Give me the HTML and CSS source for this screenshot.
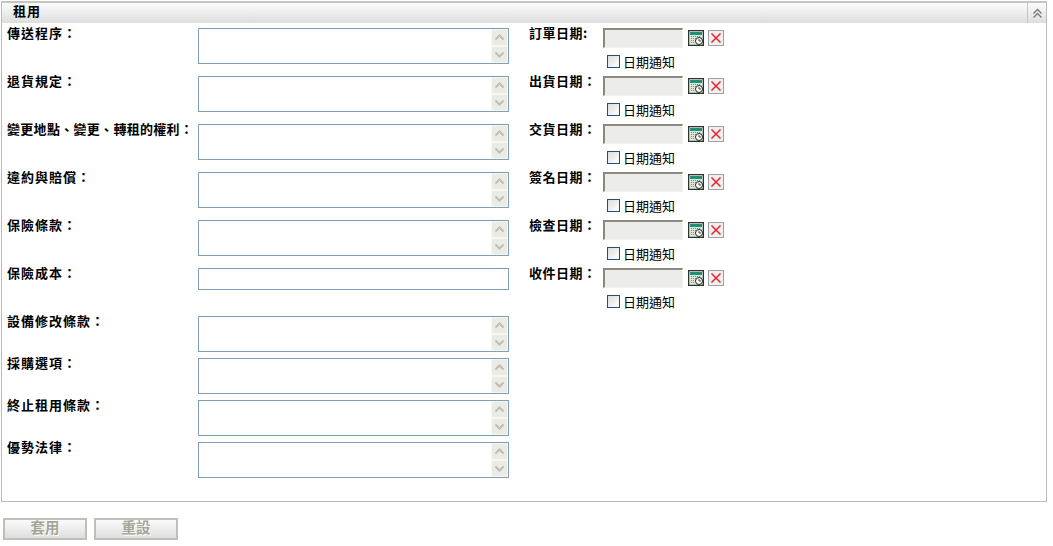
FILE: index.html
```html
<!DOCTYPE html>
<html lang="zh-Hant">
<head>
<meta charset="utf-8">
<title>租用</title>
<link rel="stylesheet" href="styles.css">
</head>
<body>
<svg class="defs" width="0" height="0" aria-hidden="true">
  <symbol id="cal" viewBox="0 0 16 16">
    <rect x="0.5" y="0.5" width="15" height="15" fill="#dce8d8" stroke="#222"/>
    <rect x="1" y="1" width="14" height="14" fill="none" stroke="#4a5a50" stroke-width="0.6"/>
    <rect x="2" y="2" width="12" height="3" fill="#1f8f78"/>
    <path d="M3 6h1v1H3zM5 6h1v1H5zM7 6h1v1H7zM9 6h1v1H9zM11 6h1v1h-1zM3 8h1v1H3zM5 8h1v1H5zM7 8h1v1H7zM3 10h1v1H3zM5 10h1v1H5zM3 12h1v1H3zM5 12h1v1H5z" fill="#3aa58a"/>
    <circle cx="11" cy="11" r="3.500" fill="#fff" stroke="#222"/>
    <path d="M11 9v2h2" fill="none" stroke="#222" stroke-width="0.800"/>
  </symbol>
  <symbol id="del" viewBox="0 0 16 16">
    <rect x="0.500" y="0.500" width="15" height="15" fill="#eeeeee" stroke="#a0a0a0"/>
    <path d="M3.500 3.500l9 9M12.500 3.500l-9 9" stroke="#e8282f" stroke-width="1.600" fill="none"/>
  </symbol>
  <symbol id="up" viewBox="0 0 16 16"><path d="M3 10.500L8 5.500l5 5" fill="none" stroke="#bebeb4" stroke-width="2.400"/></symbol>
  <symbol id="down" viewBox="0 0 16 16"><path d="M3 5.500L8 10.500l5-5" fill="none" stroke="#bebeb4" stroke-width="2.400"/></symbol>
</svg>
<section class="panel">
  <header class="panel-head">
    <h2 class="panel-title">租用</h2>
    <button class="collapse" type="button" aria-label="收合">
      <svg width="11" height="11" viewBox="0 0 11 11"><path d="M1.500 5.500L5.500 1.500l4 4M1.500 9.500l4-4 4 4" fill="none" stroke="#777" stroke-width="1.300"/></svg>
    </button>
  </header>
  <div class="panel-body">
    <div class="fields">
      <div class="row"><label class="lbl">傳送程序：</label><div class="ta"><textarea></textarea><div class="sb"><span class="sbb"><svg class="arrow"><use href="#up"/></svg></span><span class="sbb"><svg class="arrow"><use href="#down"/></svg></span></div></div></div>
      <div class="row"><label class="lbl">退貨規定：</label><div class="ta"><textarea></textarea><div class="sb"><span class="sbb"><svg class="arrow"><use href="#up"/></svg></span><span class="sbb"><svg class="arrow"><use href="#down"/></svg></span></div></div></div>
      <div class="row"><label class="lbl long">變更地點、變更、轉租的權利：</label><div class="ta"><textarea></textarea><div class="sb"><span class="sbb"><svg class="arrow"><use href="#up"/></svg></span><span class="sbb"><svg class="arrow"><use href="#down"/></svg></span></div></div></div>
      <div class="row"><label class="lbl">違約與賠償：</label><div class="ta"><textarea></textarea><div class="sb"><span class="sbb"><svg class="arrow"><use href="#up"/></svg></span><span class="sbb"><svg class="arrow"><use href="#down"/></svg></span></div></div></div>
      <div class="row"><label class="lbl">保險條款：</label><div class="ta"><textarea></textarea><div class="sb"><span class="sbb"><svg class="arrow"><use href="#up"/></svg></span><span class="sbb"><svg class="arrow"><use href="#down"/></svg></span></div></div></div>
      <div class="row"><label class="lbl">保險成本：</label><input class="txt" type="text"></div>
      <div class="row tight"><label class="lbl">設備修改條款：</label><div class="ta"><textarea></textarea><div class="sb"><span class="sbb"><svg class="arrow"><use href="#up"/></svg></span><span class="sbb"><svg class="arrow"><use href="#down"/></svg></span></div></div></div>
      <div class="row tight"><label class="lbl">採購選項：</label><div class="ta"><textarea></textarea><div class="sb"><span class="sbb"><svg class="arrow"><use href="#up"/></svg></span><span class="sbb"><svg class="arrow"><use href="#down"/></svg></span></div></div></div>
      <div class="row tight"><label class="lbl">終止租用條款：</label><div class="ta"><textarea></textarea><div class="sb"><span class="sbb"><svg class="arrow"><use href="#up"/></svg></span><span class="sbb"><svg class="arrow"><use href="#down"/></svg></span></div></div></div>
      <div class="row tight"><label class="lbl">優勢法律：</label><div class="ta"><textarea></textarea><div class="sb"><span class="sbb"><svg class="arrow"><use href="#up"/></svg></span><span class="sbb"><svg class="arrow"><use href="#down"/></svg></span></div></div></div>
    </div>
    <div class="dates">
      <div class="drow"><label class="lbl dlbl">訂單日期:</label><div class="dctl"><div class="dline"><input class="dinp" type="text" disabled><svg class="ico" width="16" height="16"><use href="#cal"/></svg><svg class="ico" width="16" height="16"><use href="#del"/></svg></div><label class="notify"><span class="cb"></span>日期通知</label></div></div>
      <div class="drow"><label class="lbl dlbl">出貨日期：</label><div class="dctl"><div class="dline"><input class="dinp" type="text" disabled><svg class="ico" width="16" height="16"><use href="#cal"/></svg><svg class="ico" width="16" height="16"><use href="#del"/></svg></div><label class="notify"><span class="cb"></span>日期通知</label></div></div>
      <div class="drow"><label class="lbl dlbl">交貨日期：</label><div class="dctl"><div class="dline"><input class="dinp" type="text" disabled><svg class="ico" width="16" height="16"><use href="#cal"/></svg><svg class="ico" width="16" height="16"><use href="#del"/></svg></div><label class="notify"><span class="cb"></span>日期通知</label></div></div>
      <div class="drow"><label class="lbl dlbl">簽名日期：</label><div class="dctl"><div class="dline"><input class="dinp" type="text" disabled><svg class="ico" width="16" height="16"><use href="#cal"/></svg><svg class="ico" width="16" height="16"><use href="#del"/></svg></div><label class="notify"><span class="cb"></span>日期通知</label></div></div>
      <div class="drow"><label class="lbl dlbl">檢查日期：</label><div class="dctl"><div class="dline"><input class="dinp" type="text" disabled><svg class="ico" width="16" height="16"><use href="#cal"/></svg><svg class="ico" width="16" height="16"><use href="#del"/></svg></div><label class="notify"><span class="cb"></span>日期通知</label></div></div>
      <div class="drow"><label class="lbl dlbl">收件日期：</label><div class="dctl"><div class="dline"><input class="dinp" type="text" disabled><svg class="ico" width="16" height="16"><use href="#cal"/></svg><svg class="ico" width="16" height="16"><use href="#del"/></svg></div><label class="notify"><span class="cb"></span>日期通知</label></div></div>
    </div>
  </div>
</section>
<div class="actions">
  <button class="btn" type="button">套用</button>
  <button class="btn" type="button">重設</button>
</div>
</body>
</html>
```
FILE: styles.css
```css
* { box-sizing: border-box; }
html, body { margin: 0; padding: 0; background: #fff; }
body {
  width: 1053px;
  height: 546px;
  overflow: hidden;
  padding: 1px 0 0 1px;
  font-family: "Noto Sans CJK TC", "Liberation Sans", sans-serif;
  font-size: 13px;
  color: #000;
}
.defs { position: absolute; }
.panel {
  width: 1046px;
  height: 501px;
  border: 1px solid #b9bbb9;
  border-top-width: 2px;
  border-top-color: #c4c6c4;
}
.panel-head {
  display: flex;
  align-items: center;
  justify-content: space-between;
  height: 20px;
  background: linear-gradient(#fbfbfb, #dcdedc);
}
.panel-title {
  margin: -4px 0 0;
  padding-left: 11px;
  font-size: 13px;
  font-weight: 700;
  line-height: 16px;
  letter-spacing: 1px;
}
.collapse {
  width: 19px;
  height: 20px;
  padding: 0;
  border: 0;
  border-left: 1px solid #c4c6c4;
  background: transparent;
  display: flex;
  align-items: center;
  justify-content: center;
}
.panel-body {
  display: flex;
  padding: 5px 0 0 5px;
}
.fields { width: 522px; }
.row {
  display: flex;
  align-items: flex-start;
  height: 48px;
}
.row.tight { height: 42px; }
.lbl {
  width: 191px;
  flex: none;
  margin-top: -2px;
  font-weight: 700;
  line-height: 13px;
  letter-spacing: 1px;
  white-space: nowrap;
}
.lbl.long { letter-spacing: 0.3px; }
.ta {
  display: flex;
  width: 311px;
  height: 36px;
  border: 1px solid #7f9db9;
  background: #fff;
}
.ta textarea {
  flex: 1;
  min-width: 0;
  border: 0;
  padding: 0;
  resize: none;
  outline: 0;
  background: transparent;
}
.sb {
  width: 17px;
  flex: none;
  display: flex;
  flex-direction: column;
}
.sbb {
  flex: 1;
  min-height: 0;
  display: flex;
  align-items: center;
  justify-content: center;
  background: #ebebe3;
  border: 1px solid #f6f6f2;
  border-radius: 2px;
}
.arrow {
  display: block;
  width: 13px;
  height: 13px;
}
.txt {
  display: block;
  width: 311px;
  height: 22px;
  border: 1px solid #7f9db9;
  padding: 0 2px;
  outline: 0;
  background: #fff;
}
.drow {
  display: flex;
  align-items: flex-start;
  height: 48px;
}
.dlbl { width: 74px; letter-spacing: 0.5px; }
.dctl { display: flex; flex-direction: column; }
.dline { display: flex; align-items: flex-start; }
.dinp {
  width: 80px;
  height: 20px;
  margin: 0 5px 0 0;
  padding: 0;
  border-style: solid;
  border-width: 2px 1px 1px 2px;
  border-color: #8c8a7c #f3f3e6 #f3f3e6 #8c8a7c;
  background: #ececea;
}
.ico { margin: 2px 4px 0 0; flex: none; }
.notify {
  display: flex;
  align-items: center;
  margin: 6px 0 0 4px;
  height: 15px;
  line-height: 15px;
  font-size: 13px;
  font-weight: 400;
}
.cb {
  width: 13px;
  height: 13px;
  margin-right: 3px;
  border: 1px solid #1c5180;
  background: linear-gradient(135deg, #dcdcd7, #fff);
}
.actions {
  display: flex;
  gap: 7px;
  margin: 16px 0 0 2px;
}
.btn {
  width: 84px;
  height: 22px;
  padding: 0 0 7px;
  border: 2px solid #bfc0b8;
  background: linear-gradient(#fbfbfb, #dcdedc);
  color: #a5a598;
  font-family: inherit;
  font-size: 14.5px;
  font-weight: 700;
  line-height: 14px;
  text-shadow: 1px 1px 0 #fff;
}
```
